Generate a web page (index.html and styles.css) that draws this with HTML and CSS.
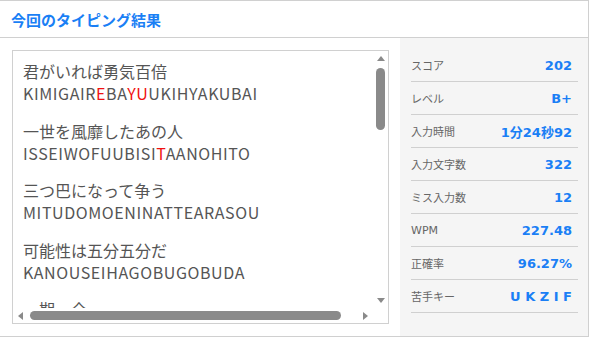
FILE: index.html
```html
<!DOCTYPE html>
<html lang="ja">
<head>
    <meta charset="UTF-8">
    <meta name="viewport" content="width=device-width, initial-scale=1.0">
    <title>今回のタイピング結果</title>
    <link rel="stylesheet" href="styles.css">
</head>
<body>
    <div class="result-card">
        <h2 class="result-title">今回のタイピング結果</h2>

        <div class="result-body">
            <!-- Typed phrases -->
            <div class="lyrics-wrap">
                <div class="lyrics">
                    <div class="lyrics-view">
                        <div class="phrase">
                            <p>君がいれば勇気百倍</p>
                            <p class="roman">KIMIGAIR<span class="miss">E</span>BA<span class="miss">YU</span>UKIHYAKUBAI</p>
                        </div>
                        <div class="phrase">
                            <p>一世を風靡したあの人</p>
                            <p class="roman">ISSEIWOFUUBISI<span class="miss">T</span>AANOHITO</p>
                        </div>
                        <div class="phrase">
                            <p>三つ巴になって争う</p>
                            <p class="roman">MITUDOMOENINATTEARASOU</p>
                        </div>
                        <div class="phrase">
                            <p>可能性は五分五分だ</p>
                            <p class="roman">KANOUSEIHAGOBUGOBUDA</p>
                        </div>
                        <div class="phrase">
                            <p>一期一会</p>
                            <p class="roman">ITIGOITIE</p>
                        </div>
                    </div>

                    <!-- Scrollbars -->
                    <div class="vbar">
                        <span class="arrow arrow-up"></span>
                        <div class="vtrack"><span class="vthumb"></span></div>
                        <span class="arrow arrow-down"></span>
                    </div>
                    <div class="hbar">
                        <span class="arrow arrow-left"></span>
                        <div class="htrack"><span class="hthumb"></span></div>
                        <span class="arrow arrow-right"></span>
                    </div>
                    <div class="corner"></div>
                </div>
            </div>

            <!-- Stats -->
            <div class="stats">
                <div class="stat-row"><span class="stat-label">スコア</span><span class="stat-value">202</span></div>
                <div class="stat-row"><span class="stat-label">レベル</span><span class="stat-value">B+</span></div>
                <div class="stat-row"><span class="stat-label">入力時間</span><span class="stat-value">1分24秒92</span></div>
                <div class="stat-row"><span class="stat-label">入力文字数</span><span class="stat-value">322</span></div>
                <div class="stat-row"><span class="stat-label">ミス入力数</span><span class="stat-value">12</span></div>
                <div class="stat-row"><span class="stat-label">WPM</span><span class="stat-value">227.48</span></div>
                <div class="stat-row"><span class="stat-label">正確率</span><span class="stat-value">96.27%</span></div>
                <div class="stat-row"><span class="stat-label">苦手キー</span><span class="stat-value">U K Z I F</span></div>
            </div>
        </div>
    </div>
</body>
</html>
```

FILE: styles.css
```css
/* Base Styles */
* {
    margin: 0;
    padding: 0;
    box-sizing: border-box;
}

body {
    font-family: 'Noto Sans CJK JP', sans-serif;
    background-color: #fff;
    color: #555;
}

/* Card */
.result-card {
    width: 589px;
    height: 337px;
    border-top: 1px solid #d0d0d0;
    border-right: 1px solid #d0d0d0;
    border-bottom: 1px solid #d0d0d0;
    display: flex;
    flex-direction: column;
}

.result-title {
    height: 37px;
    padding-left: 11px;
    display: flex;
    align-items: center;
    font-size: 15px;
    font-weight: 700;
    color: #1a7ff5;
    border-bottom: 1px solid #d0d0d0;
}

.result-body {
    flex: 1;
    display: flex;
}

/* Phrase list */
.lyrics-wrap {
    width: 400px;
    padding: 12px 11px 12px 12px;
}

.lyrics {
    width: 377px;
    height: 274px;
    border: 1px solid #d0d0d0;
    display: grid;
    grid-template-columns: 1fr 15px;
    grid-template-rows: 1fr 15px;
}

.lyrics-view {
    overflow: hidden;
    padding: 9px 10px 0 10px;
}

.phrase {
    margin-bottom: 15.5px;
}

.phrase p {
    font-size: 16px;
    line-height: 22px;
    color: #555;
    white-space: nowrap;
}

.phrase .roman {
    letter-spacing: 0.6px;
}

.miss {
    color: #f01010;
}

/* Scrollbars */
.vbar {
    display: flex;
    flex-direction: column;
    align-items: center;
}

.vtrack {
    flex: 1;
    width: 9px;
}

.vthumb {
    display: block;
    margin-top: 2px;
    height: 62px;
    background-color: #8a8a8a;
    border-radius: 5px;
}

.hbar {
    display: flex;
    align-items: center;
}

.htrack {
    flex: 1;
    height: 9px;
}

.hthumb {
    display: block;
    margin-left: 2px;
    width: 311px;
    height: 9px;
    background-color: #8a8a8a;
    border-radius: 5px;
}

.corner {
    background-color: #fff;
}

.arrow {
    flex: none;
    width: 15px;
    height: 15px;
    display: flex;
    align-items: center;
    justify-content: center;
}

.arrow::before {
    content: "";
    width: 0;
    height: 0;
    border-style: solid;
    border-color: transparent;
}

.arrow-up::before {
    border-width: 0 4px 5px 4px;
    border-bottom-color: #8a8a8a;
}

.arrow-down::before {
    border-width: 5px 4px 0 4px;
    border-top-color: #8a8a8a;
}

.arrow-left::before {
    border-width: 4px 5px 4px 0;
    border-right-color: #8a8a8a;
}

.arrow-right::before {
    border-width: 4px 0 4px 5px;
    border-left-color: #8a8a8a;
}

/* Stats panel */
.stats {
    width: 188px;
    background-color: #f5f5f5;
    padding: 11px 10px 0 11px;
}

.stat-row {
    height: 33px;
    display: flex;
    justify-content: space-between;
    align-items: center;
    padding-right: 6px;
    border-bottom: 1px solid #d0d0d0;
}

.stat-label {
    font-family: 'DejaVu Sans', 'Noto Sans CJK JP', sans-serif;
    font-size: 11px;
    color: #666;
}

.stat-value {
    font-family: 'DejaVu Sans', 'Noto Sans CJK JP', sans-serif;
    font-size: 13px;
    font-weight: 700;
    color: #1a7ff5;
}
```
